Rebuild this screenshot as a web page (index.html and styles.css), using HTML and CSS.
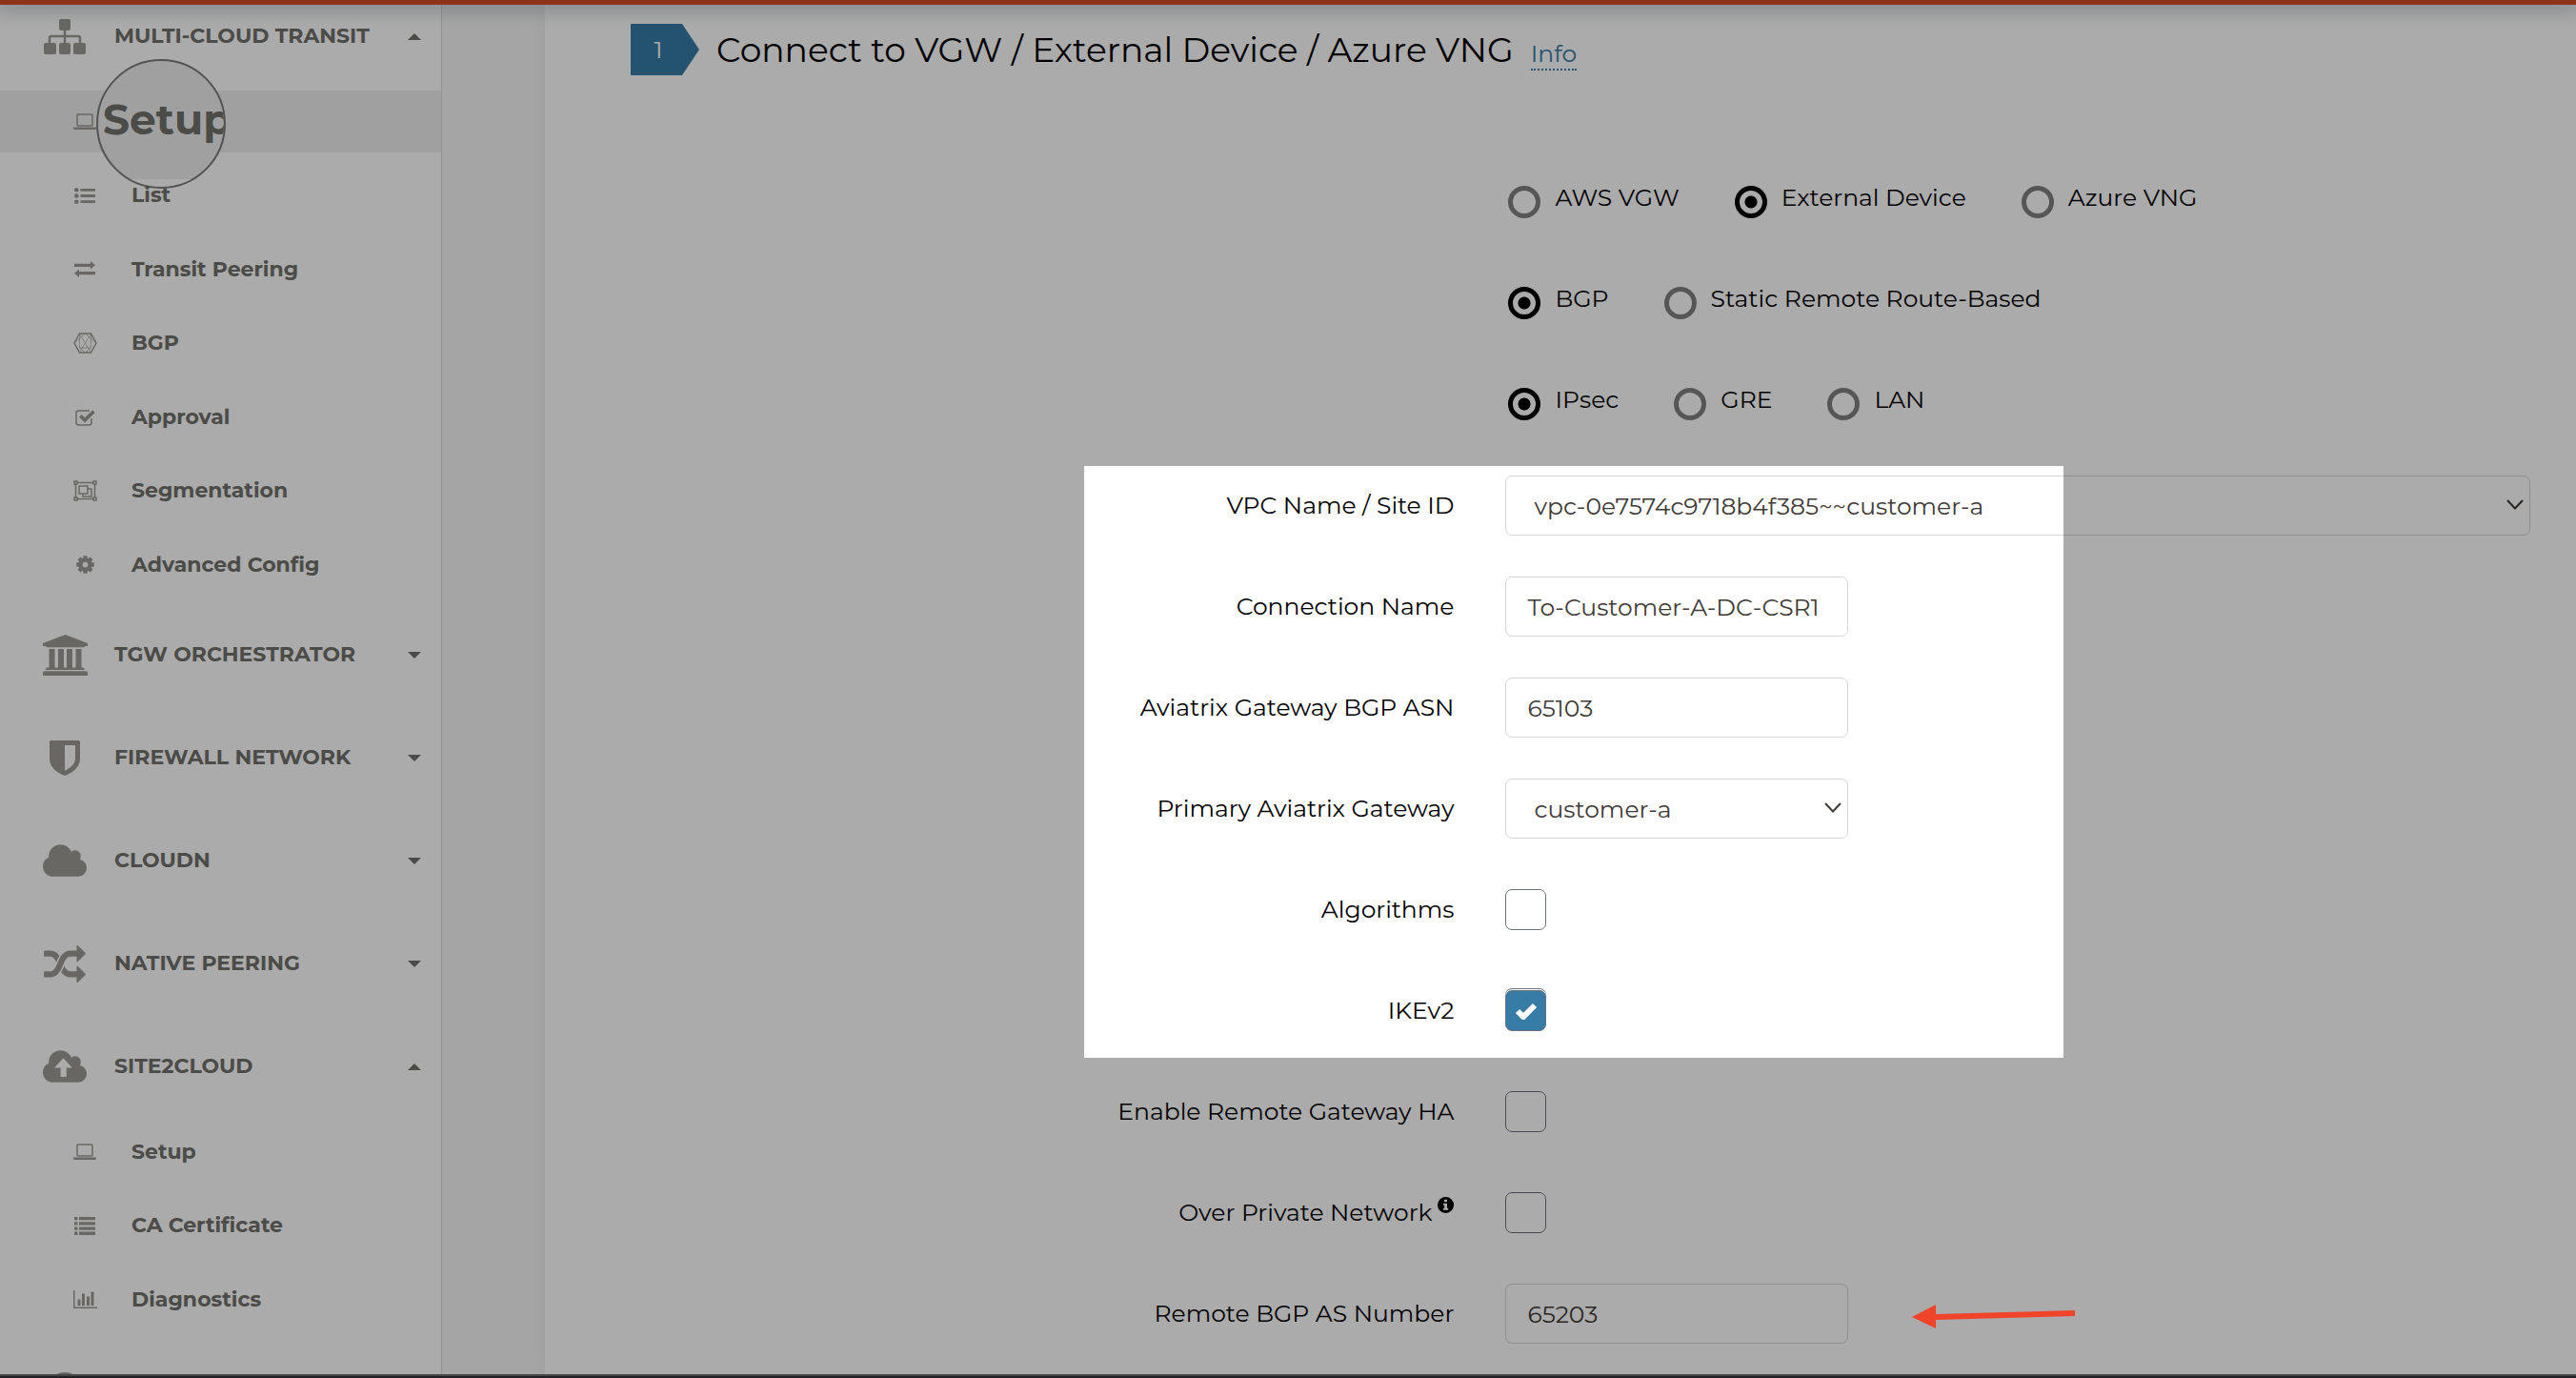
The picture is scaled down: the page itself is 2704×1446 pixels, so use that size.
FILE: index.html
```html
<!DOCTYPE html>
<html lang="en">
<head>
<meta charset="utf-8">
<title>Multi-Cloud Transit Setup</title>
<link rel="stylesheet" href="styles.css">
</head>
<body>
<div class="app">
  <header class="topbar"></header>
  <div class="layout">
    <nav class="sidebar" aria-label="Main">
      <section class="group">
        <button class="group-head" type="button" aria-expanded="true">
          <span class="group-icon"><svg width="44" height="37" viewBox="0 0 44 37"><rect x="16" width="12" height="12" rx="2"/><rect y="25" width="13" height="12" rx="2"/><rect x="16" y="25" width="12" height="12" rx="2"/><rect x="31" y="25" width="13" height="12" rx="2"/><path d="M22 11v15M6 26v-6q0-2 2-2h28q2 0 2 2v6" fill="none" stroke="currentColor" stroke-width="2.5"/></svg></span>
          <span class="group-name">MULTI-CLOUD TRANSIT</span>
          <svg class="caret" viewBox="0 0 14 7"><path d="M0 7 7 0l7 7z"/></svg>
        </button>
        <ul class="menu menu-long">
          <li class="active"><a href="#setup">
            <span class="item-icon"><svg width="24" height="17" viewBox="0 0 24 17"><rect x="4" y="1" width="16" height="12" rx="1" fill="none" stroke="currentColor" stroke-width="1.5"/><path d="M0 14.500h24v1q0 1.500-2 1.500h-20q-2 0-2-1.500z"/></svg></span>
            <span class="magnifier">Setup</span></a></li>
          <li><a href="#list"><span class="item-icon"><svg width="22" height="17" viewBox="0 0 22 17"><circle cx="2.300" cy="2.300" r="2.300"/><circle cx="2.300" cy="8.500" r="2.300"/><circle cx="2.300" cy="14.700" r="2.300"/><path d="M6.500 1h15.500v2.800h-15.500zM6.500 7.100h15.500v2.800h-15.500zM6.500 13.300h15.500v2.800h-15.500z"/></svg></span>List</a></li>
          <li><a href="#peering"><span class="item-icon"><svg width="22" height="17" viewBox="0 0 22 17"><path d="M0 2.800h17V0l5 4.300-5 4.300V6H0zM22 11H5V8.400L0 12.700 5 17v-2.800h17z"/></svg></span>Transit Peering</a></li>
          <li><a href="#bgp"><span class="item-icon"><svg width="25" height="22" viewBox="0 0 25 22"><g fill="none" stroke="currentColor"><path stroke-width="1.400" d="M6.500 1h12L24 11l-5.500 10h-12L1 11z"/><path stroke-width=".6" d="M6.500 1 18.500 21M18.500 1 6.500 21M6.500 1v15h12V1M1 11 12.500 1 24 11M18.500 16 12.500 21 6.500 16"/></g></svg></span>BGP</a></li>
          <li><a href="#approval"><span class="item-icon"><svg width="21" height="18" viewBox="0 0 21 18"><path d="M17 10v4.500q0 2.500-2.500 2.500h-11Q1 17 1 14.500v-10Q1 2 3.500 2H15" fill="none" stroke="currentColor" stroke-width="1.500"/><path d="M4 8.500 6.500 6 10 9.300 18.200 1.500 20.700 4 10 14.500z"/></svg></span>Approval</a></li>
          <li><a href="#segmentation"><span class="item-icon"><svg width="25" height="22" viewBox="0 0 25 22"><path d="M1 1h3v3H1zM21 1h3v3h-3zM1 18h3v3H1zM21 18h3v3h-3zM4 2.500h17M4 19.500h17M2.500 4v14M22.500 4v14M6 6h9v8H6zM15 9h4v8h-9v-3" fill="none" stroke="currentColor" stroke-width="1.500"/></svg></span>Segmentation</a></li>
          <li><a href="#advanced"><span class="item-icon"><svg width="19" height="19" viewBox="-10 -10 20 20"><circle r="5.200" fill="none" stroke="currentColor" stroke-width="4.400"/><path d="M-2-9.800h4l.6 3h-5.200zM-2 9.800h4l.6-3h-5.200zM-9.800-2v4l3 .6v-5.200zM9.800-2v4l-3 .6v-5.200zM-8.300-5.500l2.800-2.800 2.600 1.700-3.700 3.700zM8.300-5.500l-2.800-2.800-2.600 1.700 3.700 3.700zM-8.300 5.500l2.800 2.800 2.600-1.700-3.700-3.700zM8.300 5.500l-2.800 2.800-2.600-1.700 3.700-3.700z"/></svg></span>Advanced Config</a></li>
        </ul>
      </section>
      <section class="group">
        <button class="group-head" type="button" aria-expanded="false">
          <span class="group-icon"><svg width="47" height="43" viewBox="0 0 47 43"><path d="M23.500 0 47 9v3h-3q0 1.300-1.500 1.300h-38Q3 13.300 3 12H0V9zM6.500 15h6v19.500h3.500V15h6v19.500h3V15h6v19.500h3.500V15h6v19.500h1.500q1.500 0 1.500 1.500v1H3v-1q0-1.500 1.500-1.500h2zM1.500 38.200h44q1.500 0 1.500 1.500V43H0v-3.300q0-1.500 1.500-1.500z"/></svg></span>
          <span class="group-name">TGW ORCHESTRATOR</span>
          <svg class="caret" viewBox="0 0 14 7"><path d="M0 0h14L7 7z"/></svg>
        </button>
      </section>
      <section class="group">
        <button class="group-head" type="button" aria-expanded="false">
          <span class="group-icon"><svg width="32" height="37" viewBox="0 0 32 37"><path fill-rule="evenodd" d="M1.500 0h29Q32 0 32 1.500V19c0 8-6 14-16 18C6 33 0 27 0 19V1.500Q0 0 1.500 0zM16 5v26.800c7-3.600 11-7.600 11-12.800V5z"/></svg></span>
          <span class="group-name">FIREWALL NETWORK</span>
          <svg class="caret" viewBox="0 0 14 7"><path d="M0 0h14L7 7z"/></svg>
        </button>
      </section>
      <section class="group">
        <button class="group-head" type="button" aria-expanded="false">
          <span class="group-icon"><svg width="46" height="34" viewBox="64 128 1920 1408"><path d="M1984 1152q0 159-112.500 271.500t-271.500 112.500h-1088q-185 0-316.500-131.500t-131.500-316.500q0-132 71-241.500t187-163.500q-2-28-2-43 0-212 150-362t362-150q158 0 286.500 88t187.500 230q70-62 166-62 106 0 181 75t75 181q0 75-41 138 129 30 213 134.500t84 239.500z"/></svg></span>
          <span class="group-name">CLOUDN</span>
          <svg class="caret" viewBox="0 0 14 7"><path d="M0 0h14L7 7z"/></svg>
        </button>
      </section>
      <section class="group">
        <button class="group-head" type="button" aria-expanded="false">
          <span class="group-icon"><svg width="44" height="39" viewBox="0 32 1792 1600"><path d="M666 481q-60 92-137 273-22-45-37-72.500t-40.500-63.500-51-56.500-63-35-81.500-14.500h-224q-14 0-23-9t-9-23v-192q0-14 9-23t23-9h224q250 0 410 225zm1126 799q0 14-9 23l-320 320q-9 9-23 9-13 0-22.500-9.500t-9.500-22.500v-192q-32 0-85 .5t-81 1-73-1-71-5-64-10.500-63-18.500-58-28.500-59-40-55-53.500-56-69.500q59-93 136-273 22 45 37 72.500t40.500 63.500 51 56.500 63 35 81.500 14.500h256v-192q0-14 9-23t23-9q12 0 24 10l319 319q9 9 9 23zm0-896q0 14-9 23l-320 320q-9 9-23 9-13 0-22.500-9.500t-9.500-22.500v-192h-256q-48 0-87 15t-69 45-51 61.500-45 77.500q-32 62-78 171-29 66-49.500 111t-54 105-64 100-74 83-90 68.500-106.500 42-128 16.500h-224q-14 0-23-9t-9-23v-192q0-14 9-23t23-9h224q48 0 87-15t69-45 51-61.500 45-77.500q32-62 78-171 29-66 49.500-111t54-105 64-100 74-83 90-68.500 106.500-42 128-16.500h256v-192q0-14 9-23t23-9q12 0 24 10l319 319q9 9 9 23z"/></svg></span>
          <span class="group-name">NATIVE PEERING</span>
          <svg class="caret" viewBox="0 0 14 7"><path d="M0 0h14L7 7z"/></svg>
        </button>
      </section>
      <section class="group">
        <button class="group-head" type="button" aria-expanded="true">
          <span class="group-icon"><svg width="46" height="34" viewBox="64 128 1920 1408"><path fill-rule="evenodd" d="M1984 1152q0 159-112.500 271.500t-271.500 112.500h-1088q-185 0-316.500-131.500t-131.500-316.500q0-132 71-241.500t187-163.500q-2-28-2-43 0-212 150-362t362-150q158 0 286.500 88t187.500 230q70-62 166-62 106 0 181 75t75 181q0 75-41 138 129 30 213 134.500t84 239.500zM960 470 1350 890H1100v400H840V890H570z"/></svg></span>
          <span class="group-name">SITE2CLOUD</span>
          <svg class="caret" viewBox="0 0 14 7"><path d="M0 7 7 0l7 7z"/></svg>
        </button>
        <ul class="menu menu-short">
          <li><a href="#s2c-setup"><span class="item-icon"><svg width="24" height="17" viewBox="0 0 24 17"><rect x="4" y="1" width="16" height="12" rx="1" fill="none" stroke="currentColor" stroke-width="1.500"/><path d="M0 14.500h24v1q0 1.500-2 1.500h-20q-2 0-2-1.500z"/></svg></span>Setup</a></li>
          <li><a href="#ca"><span class="item-icon"><svg width="22" height="19" viewBox="0 0 22 19"><path d="M0 0h3.500v3.300H0zM5 0h17v3.300H5zM0 5.200h3.500v3.300H0zM5 5.200h17v3.300H5zM0 10.400h3.500v3.300H0zM5 10.400h17v3.300H5zM0 15.600h3.500v3.300H0zM5 15.600h17v3.300H5z"/></svg></span>CA Certificate</a></li>
          <li><a href="#diagnostics"><span class="item-icon"><svg width="25" height="19" viewBox="0 0 25 19"><path d="M0 0h1.500v17.500H25V19H0zM4.500 9.500h3V16h-3zM9 3.500h3V16H9zM14 6.500h3V16h-3zM18.500 1.500h3V16h-3z"/></svg></span>Diagnostics</a></li>
        </ul>
      </section>
      <section class="group">
        <div class="group-head">
          <span class="group-icon"><svg width="36" height="36" viewBox="0 0 36 36"><circle cx="18" cy="18" r="18"/></svg></span>
        </div>
      </section>
    </nav>

    <main class="content">
      <div class="step">
        <span class="step-badge">1</span>
        <h1>Connect to VGW / External Device / Azure VNG</h1>
        <a class="info" href="#info">Info</a>
      </div>

      <form class="form">
        <div class="row options">
          <label class="option"><input type="radio" name="target">AWS VGW</label>
          <label class="option"><input type="radio" name="target" checked>External Device</label>
          <label class="option"><input type="radio" name="target">Azure VNG</label>
        </div>
        <div class="row options">
          <label class="option"><input type="radio" name="routing" checked>BGP</label>
          <label class="option"><input type="radio" name="routing">Static Remote Route-Based</label>
        </div>
        <div class="row options">
          <label class="option"><input type="radio" name="tunnel" checked>IPsec</label>
          <label class="option"><input type="radio" name="tunnel">GRE</label>
          <label class="option"><input type="radio" name="tunnel">LAN</label>
        </div>

        <div class="focus-group">
          <div class="row">
            <label for="vpc">VPC Name / Site ID</label>
            <div class="select wide">
              <select id="vpc"><option>vpc-0e7574c9718b4f385~~customer-a</option></select>
              <svg class="chevron" viewBox="0 0 18 11"><path d="M1 1l8 8.500L17 1"/></svg>
            </div>
          </div>
          <div class="row">
            <label for="conn">Connection Name</label>
            <input class="field" id="conn" type="text" value="To-Customer-A-DC-CSR1">
          </div>
          <div class="row">
            <label for="asn">Aviatrix Gateway BGP ASN</label>
            <input class="field" id="asn" type="text" value="65103">
          </div>
          <div class="row">
            <label for="gw">Primary Aviatrix Gateway</label>
            <div class="select">
              <select id="gw"><option>customer-a</option></select>
              <svg class="chevron" viewBox="0 0 18 11"><path d="M1 1l8 8.500L17 1"/></svg>
            </div>
          </div>
          <div class="row">
            <label for="algo">Algorithms</label>
            <span class="check"><input id="algo" type="checkbox"></span>
          </div>
          <div class="row">
            <label for="ike">IKEv2</label>
            <span class="check"><input id="ike" type="checkbox" checked><svg class="tick" viewBox="0 0 24 18"><path d="M3 9l6 6L21 3"/></svg></span>
          </div>
          <div class="spotlight"></div>
        </div>

        <div class="row">
          <label for="ha">Enable Remote Gateway HA</label>
          <span class="check"><input id="ha" type="checkbox"></span>
        </div>
        <div class="row">
          <label class="with-hint" for="private">Over Private Network
            <svg class="hint" viewBox="0 0 17 17"><circle cx="8.500" cy="8.500" r="8.500"/><path d="M7 2.800h3v2.500H7zM6 6.800h4v5h1.200v2H6v-2h1.200v-3H6z" fill="#fff"/></svg></label>
          <span class="check"><input id="private" type="checkbox"></span>
        </div>
        <div class="row">
          <label for="remote">Remote BGP AS Number</label>
          <div class="pointed">
            <input class="field" id="remote" type="text" value="65203">
            <svg class="arrow" viewBox="0 0 171 32"><path d="M0 19 25 6v10L171 12v6L25 22v9z"/></svg>
          </div>
        </div>
      </form>
    </main>
  </div>
  <footer class="bottombar"></footer>
</div>
</body>
</html>
```
FILE: styles.css
```css
* { box-sizing: border-box; }
body { margin: 0; font-family: Montserrat, Inter, sans-serif; font-size: 25px; line-height: 32px; color: #000; background: #fff; }
button, input, select { font: inherit; color: inherit; }

.app { display: flex; flex-direction: column; height: 100vh; overflow: hidden; position: relative; }
.topbar { flex: none; height: 5px; background: #d14c27; box-shadow: 0 0 20px 4px rgba(60, 75, 90, .4); position: relative; z-index: 2; }
.layout { flex: 1; min-height: 0; display: flex; background: #f7f7f7; }
.bottombar { flex: none; height: 4px; background: #222226; border-top: 2px solid #464649; position: relative; z-index: 20; }

/* Sidebar */
.sidebar { flex: none; width: 464px; background: #fff; border-right: 1px solid #d8d8d8; color: #71706b; font-size: 22px; font-weight: 700; }
.group { padding-bottom: 42px; }
.group-head { display: flex; align-items: center; width: 100%; height: 66px; padding: 0 21px 0 44px; border: 0; background: none; text-align: left; }
.group-icon { display: flex; justify-content: center; width: 48px; margin-right: 28px; color: #9b9a94; }
.group-name { flex: 1; }
.sidebar svg { fill: currentColor; }
.caret { width: 14px; height: 7px; }
.menu { list-style: none; margin: 24px 0 -13px; padding: 0; display: flex; flex-direction: column; justify-content: space-between; }
.menu-long { min-height: 530px; }
.menu-short { min-height: 220px; }
.menu li { position: relative; }
.menu a { display: flex; align-items: center; height: 65px; padding-left: 76px; color: inherit; text-decoration: none; }
.item-icon { display: flex; justify-content: center; width: 26px; margin-right: 36px; color: #9b9a94; }
.active { background: #efefef; }
.magnifier { position: absolute; left: 101px; top: -33px; width: 136px; height: 136px; padding-left: 5px; border: 2px solid #7c7c7c; border-radius: 50%; overflow: hidden; font-size: 44px; line-height: 122px; background: linear-gradient(#efefef 124px, #fff 124px); }

/* Content */
.content { flex: 1; min-width: 0; margin-left: 108px; padding: 20px 48px 0 90px; background: #fff; box-shadow: 0 0 20px rgba(0, 0, 0, .06); }
.step { display: flex; align-items: center; }
.step-badge { width: 72px; height: 54px; padding-right: 14px; background: #377ca6; color: #fff; line-height: 54px; text-align: center; clip-path: polygon(0 0, 75% 0, 100% 50%, 75% 100%, 0 100%); }
h1 { margin: 0 18px 0 18px; font-size: 36px; line-height: 54px; font-weight: 400; }
.info { color: #377ca6; text-decoration: none; border-bottom: 2px dotted #377ca6; margin-top: 10px; }

.form { display: flex; flex-direction: column; gap: 43px; margin-top: 102px; padding-left: 4px; }
.row { display: grid; grid-template-columns: 4fr 5fr; column-gap: 54px; align-items: center; min-height: 63px; }
.row > label { text-align: right; padding-bottom: 2px; }
.focus-group { display: flex; flex-direction: column; gap: 43px; position: relative; }
.spotlight { position: absolute; top: -10px; bottom: -18px; left: 472px; right: 490px; z-index: 10; pointer-events: none; box-shadow: 0 0 0 4000px rgba(0, 0, 0, .33); }

.options { display: flex; justify-content: flex-start; column-gap: 58px; padding-left: calc((100% - 54px) * 4 / 9 + 57px); }
.row > .option { display: flex; align-items: flex-start; gap: 15px; padding-bottom: 6px; }
.option input { appearance: none; width: 34px; height: 34px; margin: 4px 0 0; border: 5px solid #808080; border-radius: 50%; }
.option input:checked { border-color: #000; background: radial-gradient(circle, #000 6px, transparent 7px); }

.field, .select select { width: 100%; height: 63px; border: 1px solid #d5d5d5; border-radius: 7px; background: #fff; color: #3f3b36; }
.field { width: 360px; padding: 0 22px; }
.select { position: relative; width: 360px; }
.select.wide { width: 100%; }
.select select { appearance: none; padding: 0 29px; }
.chevron { position: absolute; right: 7px; top: 25px; width: 18px; height: 11px; fill: none; stroke: #3f3b36; stroke-width: 2; pointer-events: none; }

.check { position: relative; display: flex; width: 43px; height: 43px; }
.check input { appearance: none; width: 43px; height: 43px; margin: 0; border: 1px solid #6c727b; border-radius: 7px; background: #fff; }
.check input:checked { background: #377ca6; box-shadow: 0 -1px 0 #fff, 0 -2px 0 #6c727b; }
.tick { position: absolute; left: 10px; top: 13px; width: 24px; height: 18px; fill: none; stroke: #fff; stroke-width: 6; pointer-events: none; }
.row > .with-hint { display: flex; justify-content: flex-end; gap: 6px; }
.hint { width: 17px; height: 17px; }
.pointed { display: flex; align-items: center; gap: 67px; }
.arrow { width: 171px; height: 32px; fill: #f0442a; position: relative; z-index: 15; }
```
